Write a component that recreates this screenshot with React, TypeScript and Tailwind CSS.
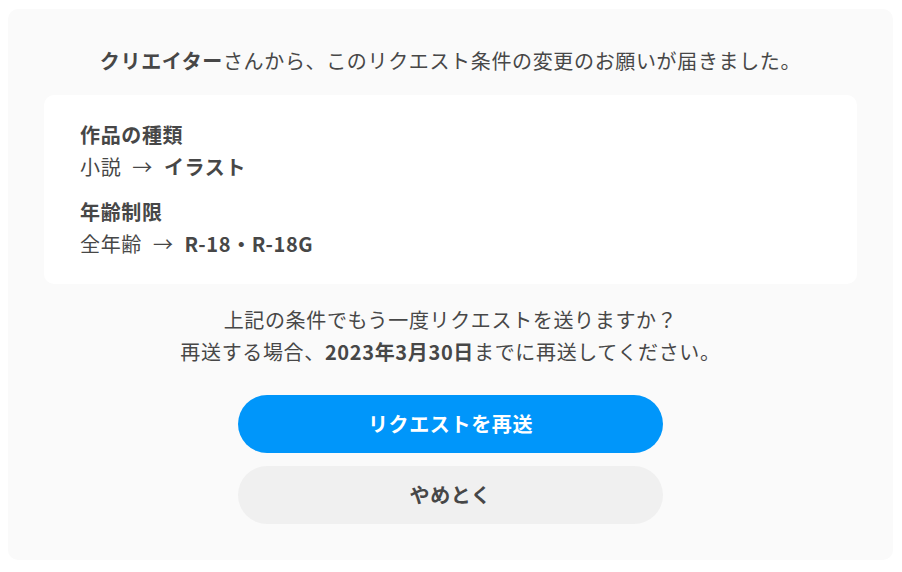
import React from 'react';

const rows = [
  { label: '作品の種類', from: '小説', to: 'イラスト' },
  { label: '年齢制限', from: '全年齢', to: 'R-18・R-18G' },
];

const App: React.FC = () => {
  return (
    <div
      className="min-h-screen bg-white p-2 text-[20px] leading-8 tracking-[0.65px] text-[#474747]"
      style={{ fontFamily: '"Noto Sans CJK JP", "Noto Sans", sans-serif' }}
    >
      <div className="mr-[1px] mt-[1px] rounded-[10px] bg-[#fafafa] px-9 pb-9 pt-9">
        <p className="text-center">
          <span className="font-bold">クリエイター</span>さんから、このリクエスト条件の変更のお願いが届きました。
        </p>

        {/* 変更内容 */}
        <div className="mt-[18px] rounded-[10px] bg-white px-9 py-6">
          {rows.map((row, i) => (
            <div key={row.label} className={i > 0 ? 'mt-[13px]' : ''}>
              <div className="font-bold">{row.label}</div>
              <div className="flex items-center">
                <span>{row.from}</span>
                <span className="mx-[11px]">→</span>
                <span className="font-bold">{row.to}</span>
              </div>
            </div>
          ))}
        </div>

        <p className="mt-[20px] text-center">
          上記の条件でもう一度リクエストを送りますか？
          <br />
          再送する場合、<span className="font-bold">2023年3月30日</span>までに再送してください。
        </p>

        <div className="mt-[27px] flex flex-col items-center gap-[13px]">
          <button className="h-[58px] w-[425px] rounded-full bg-[#0096fa] font-bold text-white">
            リクエストを再送
          </button>
          <button className="h-[58px] w-[425px] rounded-full bg-[#f0f0f0] font-bold text-[#474747]">
            やめとく
          </button>
        </div>
      </div>
    </div>
  );
};

export default App;
